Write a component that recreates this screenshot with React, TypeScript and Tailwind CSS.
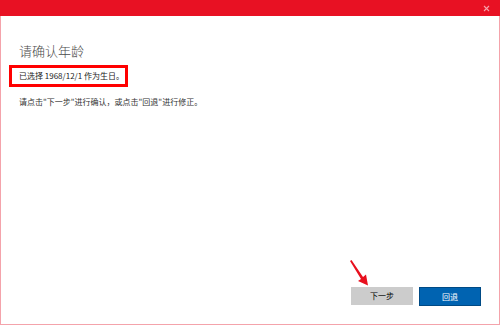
const cjk = { fontFamily: '"Noto Sans CJK SC", "Noto Sans", sans-serif' };

function CloseIcon() {
	return (
		<svg width="7" height="7" viewBox="0 0 7 7" className="block">
			<path d="M1 1L6 6M6 1L1 6" stroke="#f7a0aa" strokeWidth="1.1" />
		</svg>
	);
}

function RedArrow() {
	return (
		<svg width="26" height="30" viewBox="0 0 26 30" className="absolute left-[347px] top-[259px]">
			<polygon points="3,2 4.5,1 16,18 19,15.5 21,26.5 11,22 14,20" fill="#e8101e" />
		</svg>
	);
}

export default function App() {
	return (
		<div className="relative w-[500px] h-[325px] bg-white flex flex-col" style={cjk}>
			<header className="h-[16px] bg-[#e81123] flex items-center justify-end pr-[10px]">
				<CloseIcon />
			</header>
			<div className="flex-1 flex flex-col border-x border-b border-[#f4a3ab]">
				<main className="flex-1 flex flex-col px-[18px]">
					<h1 className="mt-[26px] text-[13px] leading-[18px] text-[#4a4a4a] font-light">请确认年龄</h1>
					<div className="mt-[5px] -ml-[10px] w-[119px] h-[22px] border-[3px] border-[#f00] flex items-center pl-[7px]">
						<span className="text-[8px] leading-[12px] text-[#222] whitespace-nowrap">已选择 1968/12/1 作为生日。</span>
					</div>
					<p className="mt-[9px] text-[8px] leading-[12px] text-[#333] whitespace-nowrap">
						请点击"下一步"进行确认，或点击"回退"进行修正。
					</p>
				</main>
				<footer className="flex justify-end gap-[6px] pr-[18px] pb-[18px]">
					<button className="w-[62px] h-[18px] bg-[#cccccc] text-[8px] text-black flex items-center justify-center">下一步</button>
					<button className="w-[62px] h-[19px] bg-[#0063b1] border border-[#004a85] text-[8px] text-white flex items-center justify-center">回退</button>
				</footer>
			</div>
			<RedArrow />
		</div>
	);
}
